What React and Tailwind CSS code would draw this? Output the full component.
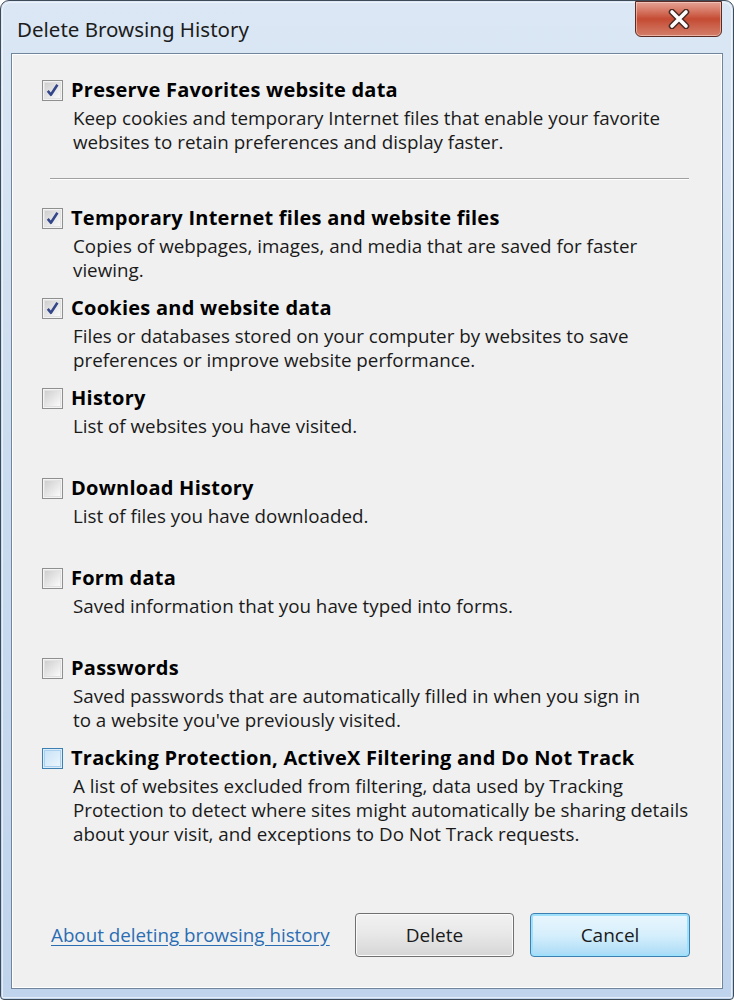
import React from 'react';

const items = [
  { title: 'Temporary Internet files and website files', checked: true, desc: ['Copies of webpages, images, and media that are saved for faster', 'viewing.'] },
  { title: 'Cookies and website data', checked: true, desc: ['Files or databases stored on your computer by websites to save', 'preferences or improve website performance.'] },
  { title: 'History', checked: false, desc: ['List of websites you have visited.'] },
  { title: 'Download History', checked: false, desc: ['List of files you have downloaded.'] },
  { title: 'Form data', checked: false, desc: ['Saved information that you have typed into forms.'] },
  { title: 'Passwords', checked: false, desc: ['Saved passwords that are automatically filled in when you sign in', "to a website you've previously visited."] },
  {
    title: 'Tracking Protection, ActiveX Filtering and Do Not Track',
    checked: false,
    hot: true,
    desc: [
      'A list of websites excluded from filtering, data used by Tracking',
      'Protection to detect where sites might automatically be sharing details',
      'about your visit, and exceptions to Do Not Track requests.',
    ],
  },
];

const CheckBox = ({ checked, hot }) => (
  <div
    className={`w-[21px] h-[21px] shrink-0 border flex items-center justify-center ${
      hot ? 'border-[#3c7fb1] bg-[#dcecf8]' : 'border-[#8e8f8f] bg-[#f4f4f4]'
    }`}
  >
    <div
      className={`w-[17px] h-[17px] border flex items-center justify-center ${
        hot ? 'border-[#a9d1ef] bg-gradient-to-br from-[#c9e3f7] to-[#eaf5fd]' : 'border-[#e2e2e2] bg-gradient-to-br from-[#cfcfcf] to-[#fbfbfb]'
      }`}
    >
      {checked && (
        <svg width="15" height="15" viewBox="0 0 14 14">
          <path d="M2.6 7.4 L5.5 11 L11.6 1.6" fill="none" stroke="#34478a" strokeWidth="2.4" strokeLinejoin="round" />
        </svg>
      )}
    </div>
  </div>
);

const Option = ({ item, first }) => (
  <div className={`flex gap-[8px] ${first ? '' : 'h-[90px]'}`}>
    <div className="pt-[1px]">
      <CheckBox checked={item.checked} hot={item.hot} />
    </div>
    <div className="flex flex-col">
      <div className="text-[20px] font-bold text-black leading-[22px] tracking-[0.25px] whitespace-nowrap">{item.title}</div>
      <div className="mt-[5px] pl-[2px] text-[18.8px] text-[#1a1a1a] leading-[24px] whitespace-nowrap">
        {item.desc.map((d, i) => (
          <div key={i}>{d}</div>
        ))}
      </div>
    </div>
  </div>
);

export default function App() {
  return (
    <div
      className="w-[734px] h-[1000px] overflow-hidden"
      style={{ fontFamily: '"Open Sans", "Noto Sans", sans-serif' }}
    >
      {/* window frame */}
      <div className="w-full h-full rounded-t-[9px] rounded-b-[4px] border border-[#3d4a58] bg-gradient-to-b from-[#dbe7f4] via-[#c9dbef] to-[#bfd4ec] flex flex-col p-[1px]">
        <div className="flex flex-col flex-1 rounded-t-[8px] border border-[#f4f8fc]/70">
          {/* title bar */}
          <div className="h-[50px] flex items-start justify-between relative">
            <div className="pl-[14px] pt-[12px] text-[20.5px] text-[#1c1c1c] leading-[28px]" style={{ fontFamily: '"Noto Sans", sans-serif' }}>
              Delete Browsing History
            </div>
            <div className="mr-[9px] -mt-[2px] w-[87px] h-[36px] rounded-b-[6px] border border-[#5b2c26] bg-gradient-to-b from-[#e4a395] via-[#c54a33] to-[#d27e69] flex items-center justify-center shadow-[inset_0_0_0_1px_rgba(255,220,210,0.55)]">
              <svg width="24" height="20" viewBox="0 0 24 20">
                <path d="M5 3 L19 17 M19 3 L5 17" stroke="#4a2a24" strokeWidth="6.5" strokeLinecap="round" />
                <path d="M5 3 L19 17 M19 3 L5 17" stroke="#ffffff" strokeWidth="3.6" strokeLinecap="round" />
              </svg>
            </div>
          </div>

          {/* content panel */}
          <div className="flex-1 mx-[8px] mb-[8px] border border-[#71859c] bg-[#f0f0f0] shadow-[inset_0_0_0_1px_#ffffff] flex flex-col">
            <div className="pl-[30px] pr-[30px] pt-[25px] flex flex-col">
              <Option
                first
                item={{
                  title: 'Preserve Favorites website data',
                  checked: true,
                  desc: ['Keep cookies and temporary Internet files that enable your favorite', 'websites to retain preferences and display faster.'],
                }}
              />
              <div className="mt-[24px] mb-[27px] ml-[8px] mr-[3px] h-[2px] border-t border-[#a0a0a0] border-b border-b-white" />
              {items.map((item, i) => (
                <Option key={i} item={item} />
              ))}
            </div>

            {/* footer */}
            <div className="mt-auto mb-[31px] flex items-center pl-[39px] pr-[32px]">
              <a href="#" className="text-[18.8px] text-[#2b6db3] underline underline-offset-[3px] leading-[24px]">
                About deleting browsing history
              </a>
              <div className="ml-auto flex gap-[16px]">
                <button className="w-[159px] h-[44px] rounded-[4px] border border-[#707070] bg-gradient-to-b from-[#f2f2f2] via-[#e7e7e7] to-[#d6d6d6] shadow-[inset_0_0_0_1px_#fbfbfb] text-[19px] text-[#1a1a1a]">
                  Delete
                </button>
                <button className="w-[160px] h-[44px] rounded-[4px] border border-[#3c7fb1] bg-gradient-to-b from-[#eaf6fd] via-[#d6effc] to-[#a9dbf6] shadow-[inset_0_0_0_2px_#9fe0fb] text-[19px] text-[#1a1a1a]">
                  Cancel
                </button>
              </div>
            </div>
          </div>
        </div>
      </div>
    </div>
  );
}
